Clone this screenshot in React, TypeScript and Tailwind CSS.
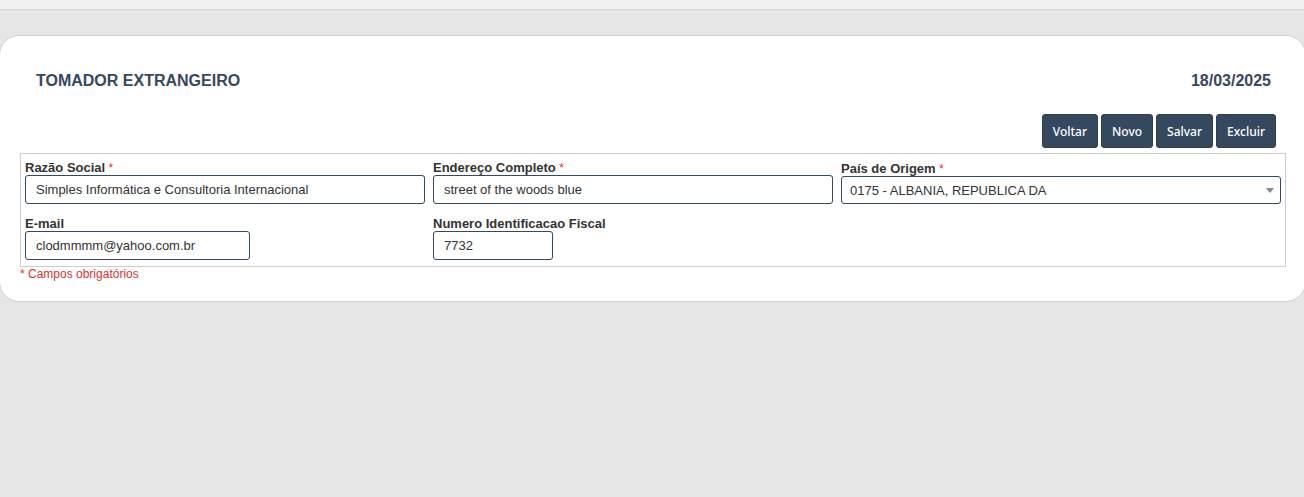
import { useState, type ReactNode } from "react";

const control =
  "block rounded-[3px] border border-[#34495e] bg-white text-[13px] text-[#333] outline-none focus:ring-1 focus:ring-[#34495e]";

function Field({
  id,
  label,
  required = false,
  className = "pt-0.5",
  children,
}: {
  id: string;
  label: string;
  required?: boolean;
  className?: string;
  children: ReactNode;
}) {
  return (
    <div className="min-w-0">
      <label htmlFor={id} className={`block text-[13px] leading-[15px] font-bold ${className}`}>
        {label}
        {required && <span className="text-[12px] leading-none font-normal text-[#d9332e]"> *</span>}
      </label>
      {children}
    </div>
  );
}

const actions = ["Voltar", "Novo", "Salvar", "Excluir"];

export default function App() {
  const [form, setForm] = useState({
    razao: "Simples Informática e Consultoria Internacional",
    endereco: "street of the woods blue",
    email: "clodmmmm@yahoo.com.br",
    nif: "7732",
  });
  const bind = (key: keyof typeof form) => ({
    id: key,
    value: form[key],
    onChange: (e: { target: { value: string } }) => setForm({ ...form, [key]: e.target.value }),
  });

  return (
    <div className="min-h-screen overflow-hidden bg-[#e6e6e6] font-['Liberation_Sans',Arial,sans-serif] text-[#333]">
      <header className="h-2.5 border-b border-[#d2d2d2] bg-[#f1f1f1]" />
      <main className="-mr-0.5 -ml-px mt-[25px] rounded-[20px] border border-[#d0d0d0] bg-white pt-[33px] pr-[19px] pb-5 pl-5">
        <div className="flex items-center justify-between pr-[15px] pl-4 text-[16px] leading-6 font-bold text-[#34495e]">
          <h1>TOMADOR EXTRANGEIRO</h1>
          <time dateTime="2025-03-18">18/03/2025</time>
        </div>
        <form onSubmit={(e) => e.preventDefault()}>
          <div className="mt-[21px] flex justify-end gap-[3px] pr-2.5">
            {actions.map((name) => (
              <button
                key={name}
                type="button"
                className="h-[34px] rounded-[3px] border border-[#2c3e50] bg-[#34495e] px-2.5 pt-0.5 font-['Noto_Sans',sans-serif] text-[12px] font-medium text-white hover:bg-[#2c3e50]"
              >
                {name}
              </button>
            ))}
          </div>
          <div className="mt-[5px] grid grid-cols-[400fr_400fr_440fr] gap-x-2 gap-y-2.5 border border-[#ccc] px-1 pt-1 pb-1.5">
            <Field id="razao" label="Razão Social" required>
              <input {...bind("razao")} type="text" required className={`${control} h-[29px] w-full px-2.5`} />
            </Field>
            <Field id="endereco" label="Endereço Completo" required>
              <input {...bind("endereco")} type="text" required className={`${control} h-[29px] w-full px-2.5`} />
            </Field>
            <Field id="pais" label="País de Origem" required className="pt-[3px]">
              <div className="relative">
                <select id="pais" required className={`${control} h-7 w-full appearance-none pt-0.5 pr-6 pl-2`}>
                  <option>0175 - ALBANIA, REPUBLICA DA</option>
                </select>
                <svg
                  viewBox="0 0 8 5"
                  className="pointer-events-none absolute top-3 right-[7px] h-[5px] w-2 fill-[#888]"
                  aria-hidden="true"
                >
                  <path d="M0 0h8L4 5z" />
                </svg>
              </div>
            </Field>
            <Field id="email" label="E-mail">
              <input {...bind("email")} type="email" className={`${control} h-[29px] w-[225px] px-2.5`} />
            </Field>
            <Field id="nif" label="Numero Identificacao Fiscal">
              <input {...bind("nif")} type="text" className={`${control} h-[29px] w-[120px] px-2.5`} />
            </Field>
          </div>
          <p className="text-[12px] leading-[14px] text-[#d9332e]">* Campos obrigatórios</p>
        </form>
      </main>
    </div>
  );
}
